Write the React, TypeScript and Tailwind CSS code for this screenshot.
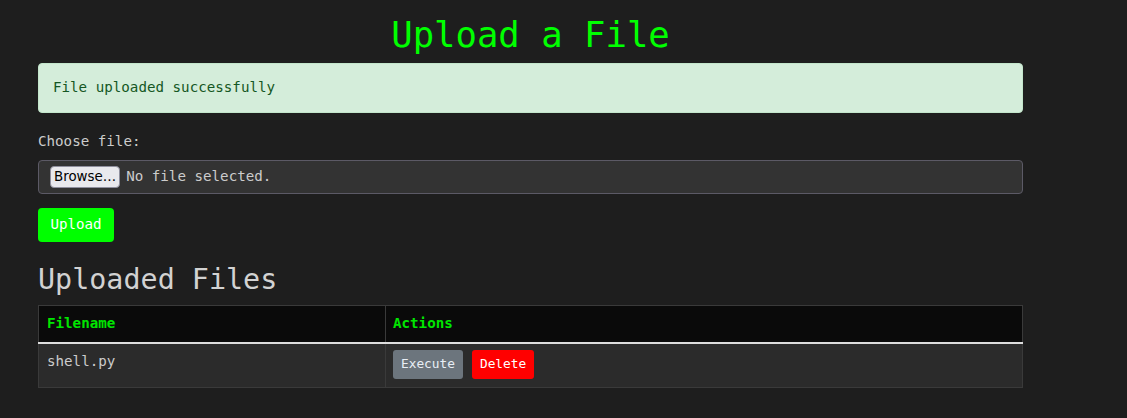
import React from 'react';

const mono = { fontFamily: '"DejaVu Sans Mono", monospace' };

const files = ['shell.py'];

export default function App() {
  return (
    <div className="min-h-[418px] bg-[#1e1e1e] text-[#cccccc] text-[14.2px]" style={mono}>
      <div className="w-[985px] ml-[38px] pt-[13px]">
        <h1 className="text-center text-[35.6px] leading-[43px] text-[#00ff00] mb-[7px]">Upload a File</h1>

        <div className="h-[50px] flex items-center px-[14px] rounded-[4px] border border-[#c3e6cb] bg-[#d4edda] text-[#155724]">
          File uploaded successfully
        </div>

        <form className="mt-[18px]" onSubmit={(e) => e.preventDefault()}>
          <label className="block leading-[21px] mb-[8px]">Choose file:</label>
          <div className="h-[34px] flex items-center gap-[6px] px-[11px] rounded-[4px] border border-[#5c5a66] bg-[#333333]">
            <span
              className="h-[22px] flex items-center px-[3px] rounded-[4px] border border-[#8f8f9d] bg-[#e9e9ed] text-[#000000] text-[13.4px]"
              style={{ fontFamily: '"DejaVu Sans", sans-serif' }}
            >
              Browse…
            </span>
            <span className="text-[#cccccc]">No file selected.</span>
          </div>
          <button className="mt-[14px] h-[34px] w-[76px] rounded-[4px] bg-[#00ff00] text-white" style={mono}>
            Upload
          </button>
        </form>

        <h2 className="mt-[20px] text-[28.4px] leading-[35px] text-[#d2d2d2] mb-[8px]">Uploaded Files</h2>

        <table className="w-full border-collapse border border-[#3a3a3a]">
          <thead>
            <tr className="bg-[#0a0a0a] border-b-2 border-[#dddddd]">
              <th className="w-[347px] h-[37px] px-[8px] text-left font-bold text-[#00e600] border-r border-[#3a3a3a]">Filename</th>
              <th className="px-[7px] text-left font-bold text-[#00e600]">Actions</th>
            </tr>
          </thead>
          <tbody>
            {files.map((f) => (
              <tr key={f} className="bg-[#2b2b2b]">
                <td className="px-[8px] pt-[7px] pb-[8px] align-top text-[#cccccc] border-r border-[#3a3a3a]">{f}</td>
                <td className="px-[7px] pt-[6px] pb-[8px] align-top">
                  <div className="flex gap-[9px]">
                    <button className="h-[29px] px-[8px] rounded-[3px] bg-[#6c757d] text-[#e8eef5] text-[12.8px]" style={mono}>
                      Execute
                    </button>
                    <button className="h-[29px] px-[8px] rounded-[3px] bg-[#ff0000] text-white text-[12.8px]" style={mono}>
                      Delete
                    </button>
                  </div>
                </td>
              </tr>
            ))}
          </tbody>
        </table>
      </div>
    </div>
  );
}
